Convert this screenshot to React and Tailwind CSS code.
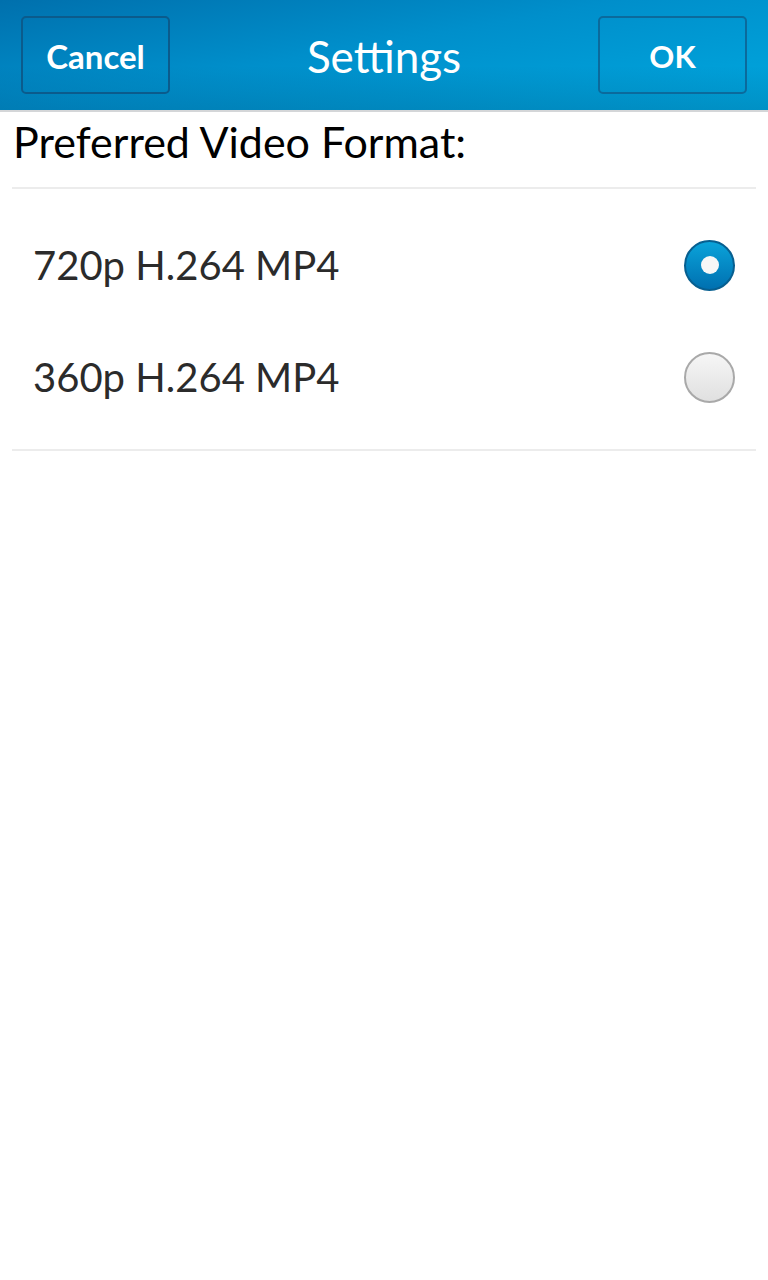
export default function App() {
  const options = [
    { label: "720p H.264 MP4", selected: true },
    { label: "360p H.264 MP4", selected: false },
  ];

  return (
    <div className="min-h-[1280px] w-[768px] bg-white font-['Lato','Liberation_Sans',sans-serif]">
      <div className="h-[112px] border-b-2 border-[#d4d6d8] bg-[linear-gradient(170deg,#0070ad_0%,#008fcb_45%,#00a8df_100%)] relative">
        <div className="absolute inset-0 bg-[linear-gradient(to_bottom,rgba(0,0,0,0)_0%,rgba(0,0,0,0)_60%,rgba(0,40,80,0.18)_100%)]" />
        <div className="relative flex h-full items-start justify-between px-[21px] pt-[16px]">
          <button className="flex h-[78px] w-[149px] items-center justify-center rounded-[5px] border-2 border-[#0b5b8c] pt-[3px] text-[33px] font-bold text-white">
            Cancel
          </button>
          <div className="pt-[10px] text-[44px] leading-[60px] text-white">Settings</div>
          <button className="flex h-[78px] w-[149px] items-center justify-center rounded-[5px] border-2 border-[#0b6a9c] pt-[3px] text-[31px] font-bold text-white">
            OK
          </button>
        </div>
      </div>

      <div className="px-[12px]">
        <div className="h-[75px] pl-[1px] pt-[4px] text-[43px] leading-[52px] text-black">
          Preferred Video Format:
        </div>
        <div className="border-t-2 border-[#ececec]" />
        <div className="pt-[20px] pb-[16px]">
          {options.map((o) => (
            <div key={o.label} className="flex h-[112px] items-center justify-between pl-[21px] pr-[21px]">
              <span className="text-[40px] text-[#2b2b2b]">{o.label}</span>
              {o.selected ? (
                <div className="flex h-[51px] w-[51px] items-center justify-center rounded-full border-2 border-[#075f90] bg-[linear-gradient(to_bottom,#0aa3da,#0070b0)]">
                  <div className="h-[18px] w-[18px] rounded-full bg-[#f7f7f7]" />
                </div>
              ) : (
                <div className="h-[51px] w-[51px] rounded-full border-2 border-[#a9a9a9] bg-[linear-gradient(to_bottom,#f6f6f6,#e0e0e0)]" />
              )}
            </div>
          ))}
        </div>
        <div className="border-t-2 border-[#ececec]" />
      </div>
    </div>
  );
}
